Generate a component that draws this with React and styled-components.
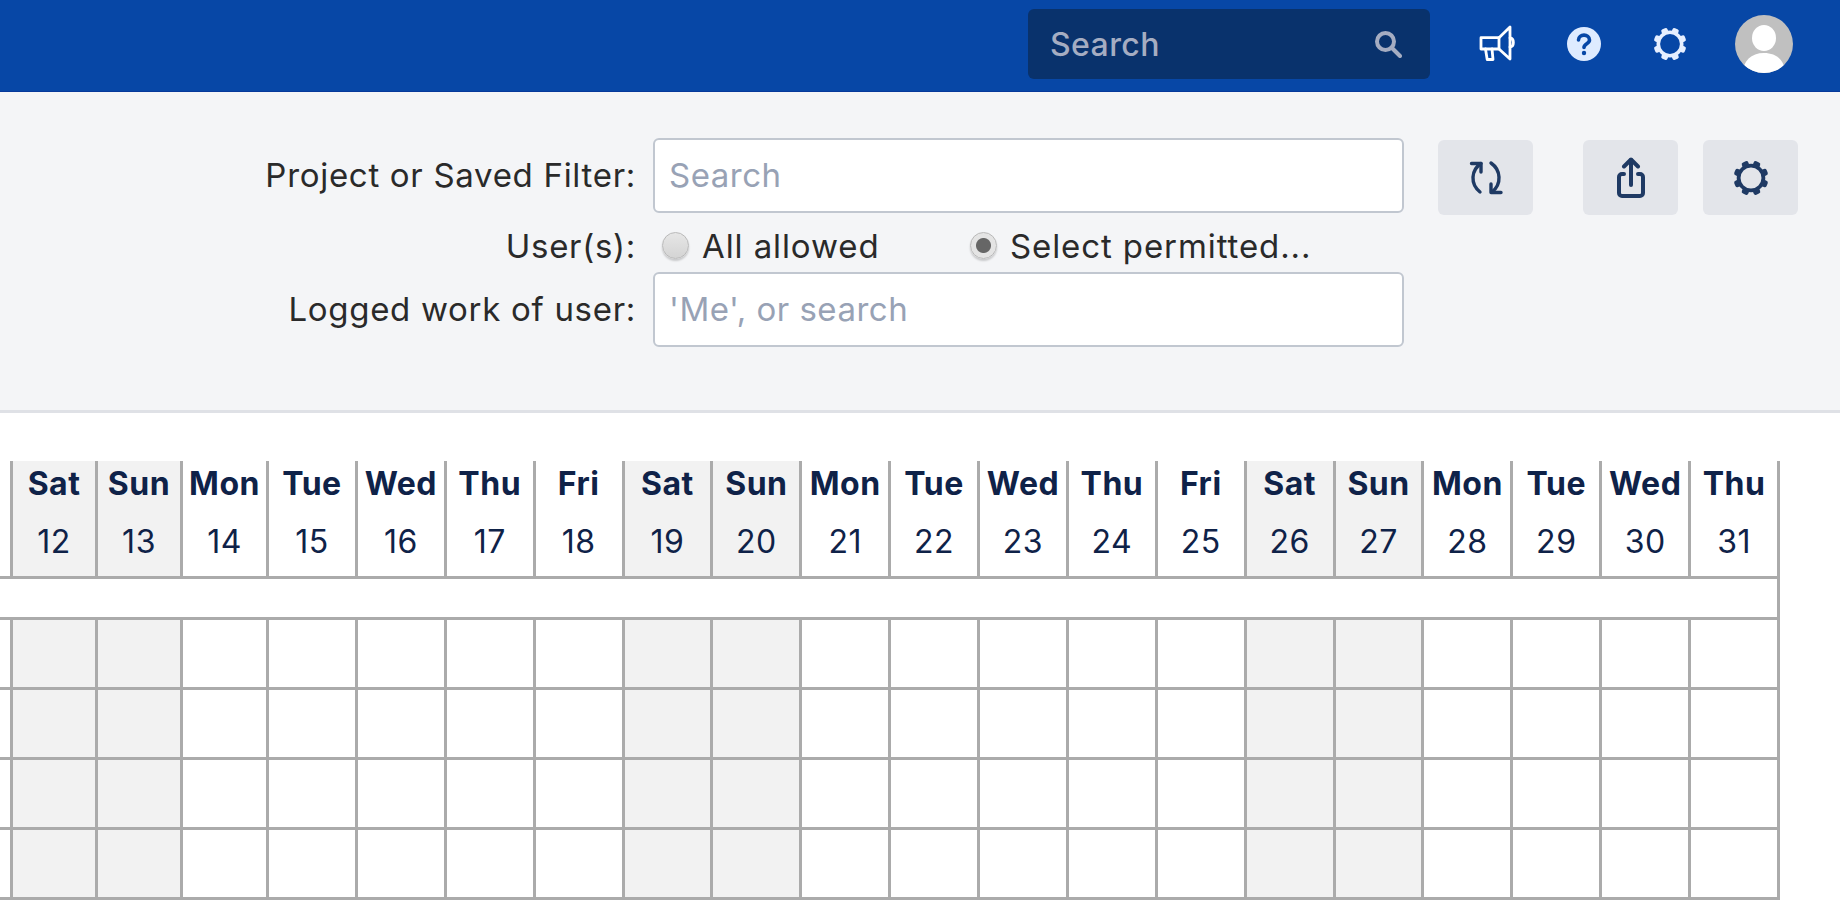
import React from 'react';
import styled, { createGlobalStyle } from 'styled-components';

const GlobalStyle = createGlobalStyle`
  html, body {
    margin: 0;
    height: 900px;
    overflow: hidden;
    background: #fff;
    font-family: Inter, "Liberation Sans", sans-serif;
  }
  * {
    box-sizing: border-box;
  }
`;

const TopBar = styled.header`
  display: flex;
  align-items: center;
  height: 92px;
  padding: 0 47px 4px 1028px;
  background: #0747a6;
  border-bottom: 1px solid #06399a;
`;

const NavSearch = styled.div`
  display: flex;
  flex: none;
  align-items: center;
  justify-content: space-between;
  width: 402px;
  height: 70px;
  margin-right: 25px;
  padding: 0 28px 0 22px;
  background: #09326c;
  border-radius: 6px;
`;

const NavSearchInput = styled.input`
  width: 220px;
  border: 0;
  outline: 0;
  padding: 2px 0 0;
  background: transparent;
  font: 500 32px Inter, sans-serif;
  letter-spacing: 0.4px;
  &::placeholder {
    color: #a5adc2;
    opacity: 1;
  }
`;

const NavIcon = styled.span`
  display: flex;
  flex: none;
  justify-content: center;
  width: 86px;
  svg {
    display: block;
  }
`;

const Avatar = styled.span`
  display: block;
  flex: none;
  width: 58px;
  height: 58px;
  margin-left: 22px;
  border-radius: 50%;
  overflow: hidden;
  background: #c0c0c0;
`;

const FilterPanel = styled.section`
  display: flex;
  align-items: flex-start;
  height: 321px;
  padding-top: 46px;
  background: #f4f5f7;
  border-bottom: 3px solid #dfe1e6;
`;

const FilterForm = styled.div`
  display: grid;
  grid-template-columns: 636px 751px;
  grid-template-rows: 75px 59px 75px;
  column-gap: 17px;
  align-items: center;
`;

const FieldLabel = styled.label`
  justify-self: end;
  font-size: 33px;
  letter-spacing: 0.7px;
  color: #2a2a2a;
  padding-top: ${p => p.$nudge || 0}px;
  padding-bottom: ${p => (p.$nudge ? 0 : 2)}px;
`;

const TextField = styled.input`
  width: 100%;
  height: 75px;
  padding: 0 14px 2px;
  background: #fff;
  border: 2px solid #c1c7d0;
  border-radius: 6px;
  outline: 0;
  font: 400 33px Inter, sans-serif;
  letter-spacing: 0.5px;
  color: #333;
  &::placeholder {
    color: #98a2b5;
    opacity: 1;
  }
`;

const RadioRow = styled.div`
  display: flex;
  align-items: center;
  padding: 6px 0 0 9px;
`;

const RadioOption = styled.label`
  display: flex;
  align-items: center;
  width: ${p => p.$width}px;
  font-size: 33px;
  letter-spacing: 0.9px;
  color: #2a2a2a;
`;

const Radio = styled.input`
  appearance: none;
  width: 27px;
  height: 27px;
  margin: 0 13px 0 0;
  border-radius: 50%;
  border: 1px solid #b9b9b9;
  box-shadow: 0 2px 2px rgba(0, 0, 0, 0.18);
  background: linear-gradient(#e6e6e6, #d4d4d4);
  &:checked {
    background: radial-gradient(circle, #666 0 7px, #e4e4e4 8px);
  }
`;

const Actions = styled.div`
  display: flex;
  margin: 2px 0 0 34px;
`;

const ActionButton = styled.button`
  display: flex;
  align-items: center;
  justify-content: center;
  width: 95px;
  height: 75px;
  margin-left: ${p => p.$gap || 0}px;
  padding: 0;
  border: 0;
  border-radius: 6px;
  background: #e3e5ea;
  color: #1f3a64;
`;

const Calendar = styled.section`
  padding-top: 48px;
`;

const DayGrid = styled.div`
  display: grid;
  width: 1780px;
  grid-template-columns: 13px 85px 85px 86px repeat(17, 1fr);
  grid-template-rows: 118px 41px repeat(4, 70px);
`;

const Cell = styled.div`
  display: flex;
  flex-direction: column;
  align-items: center;
  min-width: 0;
  background: ${p => (p.$weekend ? '#f2f2f2' : '#fff')};
  border-right: 3px solid #ababab;
  border-bottom: 3px solid #ababab;
  color: #0f2248;
`;

const SpanRow = styled.div`
  grid-column: 1 / -1;
  border-right: 3px solid #ababab;
  border-bottom: 3px solid #ababab;
`;

const DayName = styled.div`
  font-size: 32px;
  font-weight: 700;
  letter-spacing: 0.5px;
  line-height: 46px;
`;

const DayNumber = styled.div`
  margin-top: 13px;
  font-size: 32px;
  letter-spacing: 0.5px;
  line-height: 44px;
`;

const stroke = { fill: 'none', stroke: 'currentColor', strokeLinecap: 'round', strokeLinejoin: 'round' };

// 8 teeth around a ring, same drawing in the nav and on the settings button
const GearIcon = ({ size = 34, color = '#e6efff' }) => (
  <svg width={size} height={size} viewBox="0 0 34 34" style={{ color }}>
    <circle cx="17" cy="17" r="11.700" {...stroke} strokeWidth="3.600" />
    {[22.5, 67.5, 112.5, 157.5, 202.5, 247.5, 292.5, 337.5].map(a => (
      <rect key={a} x="13.700" y="0.500" width="6.600" height="6" rx="2" fill="currentColor" transform={`rotate(${a} 17 17)`} />
    ))}
  </svg>
);

const MegaphoneIcon = () => (
  <svg width="38" height="37" viewBox="0 0 38 37" style={{ color: '#fff' }} {...stroke} strokeWidth="2.800">
    <path d="M2 12.700h18L31 2v32L20 24H2z" />
    <path d="M20 12.700V24" />
    <path d="M31 13c4.500 .5 4.500 8.500 0 9" />
    <path d="M6.500 24l1.700 10.500H14L13 24" />
  </svg>
);

const HelpIcon = () => (
  <svg width="34" height="34" viewBox="0 0 34 34">
    <circle cx="17" cy="17" r="17" fill="#deebff" />
    <path d="M11.500 13c0-6.500 11-6.500 11 0 0 4-5.500 3.500-5.500 7.500" fill="none" stroke="#0747a6" strokeWidth="3.600" strokeLinecap="round" />
    <circle cx="17" cy="26" r="2.200" fill="#0747a6" />
  </svg>
);

const SearchIcon = () => (
  <svg width="28" height="28" viewBox="0 0 28 28" style={{ color: '#a5adc2' }} {...stroke} strokeWidth="4">
    <circle cx="11.500" cy="11.500" r="8.500" />
    <path d="M18 18l8 8" />
  </svg>
);

const RefreshIcon = () => (
  <svg width="36" height="36" viewBox="0 0 36 36" {...stroke} strokeWidth="3.400">
    <path d="M13 3.500C3 10 2 24 12 32" />
    <path d="M3.500 3.500H13V12" />
    <path d="M23 3C33 10 34 24 24 32" />
    <path d="M33 32.500H23V24" />
  </svg>
);

const ShareIcon = () => (
  <svg width="32" height="42" viewBox="0 0 32 42" {...stroke} strokeWidth="4">
    <path d="M16 28V3" />
    <path d="M9 9.500L16 2.500l7 7" />
    <path d="M9 17H7a3 3 0 0 0-3 3v16a3 3 0 0 0 3 3h18a3 3 0 0 0 3-3V20a3 3 0 0 0-3-3h-2" />
  </svg>
);

const AvatarImage = () => (
  <svg width="58" height="58" viewBox="0 0 58 58">
    <ellipse cx="29" cy="23" rx="12" ry="13" fill="#fff" />
    <path d="M8 58c0-12 8-20 21-20s21 8 21 20z" fill="#fff" />
  </svg>
);

const days = [
  ['Sat', 12, true], ['Sun', 13, true], ['Mon', 14], ['Tue', 15], ['Wed', 16], ['Thu', 17], ['Fri', 18],
  ['Sat', 19, true], ['Sun', 20, true], ['Mon', 21], ['Tue', 22], ['Wed', 23], ['Thu', 24], ['Fri', 25],
  ['Sat', 26, true], ['Sun', 27, true], ['Mon', 28], ['Tue', 29], ['Wed', 30], ['Thu', 31],
];

export default function App() {
  return (
    <>
      <GlobalStyle />
      <TopBar>
        <NavSearch>
          <NavSearchInput placeholder="Search" />
          <SearchIcon />
        </NavSearch>
        <NavIcon><MegaphoneIcon /></NavIcon>
        <NavIcon><HelpIcon /></NavIcon>
        <NavIcon><GearIcon /></NavIcon>
        <Avatar><AvatarImage /></Avatar>
      </TopBar>

      <FilterPanel>
        <FilterForm>
          <FieldLabel>Project or Saved Filter:</FieldLabel>
          <TextField placeholder="Search" />
          <FieldLabel $nudge={6}>User(s):</FieldLabel>
          <RadioRow>
            <RadioOption $width={308}><Radio type="radio" name="users" />All allowed</RadioOption>
            <RadioOption $width={360}><Radio type="radio" name="users" defaultChecked />Select permitted...</RadioOption>
          </RadioRow>
          <FieldLabel>Logged work of user:</FieldLabel>
          <TextField placeholder="'Me', or search" />
        </FilterForm>
        <Actions>
          <ActionButton><RefreshIcon /></ActionButton>
          <ActionButton $gap={50}><ShareIcon /></ActionButton>
          <ActionButton $gap={25}><GearIcon size={36} color="#1f3a64" /></ActionButton>
        </Actions>
      </FilterPanel>

      <Calendar>
        <DayGrid>
          <Cell />
          {days.map(([name, num, weekend]) => (
            <Cell key={num} $weekend={weekend}>
              <DayName>{name}</DayName>
              <DayNumber>{num}</DayNumber>
            </Cell>
          ))}
          <SpanRow />
          {[0, 1, 2, 3].map(row => (
            <React.Fragment key={row}>
              <Cell />
              {days.map(([, num, weekend]) => <Cell key={num} $weekend={weekend} />)}
            </React.Fragment>
          ))}
        </DayGrid>
      </Calendar>
    </>
  );
}
